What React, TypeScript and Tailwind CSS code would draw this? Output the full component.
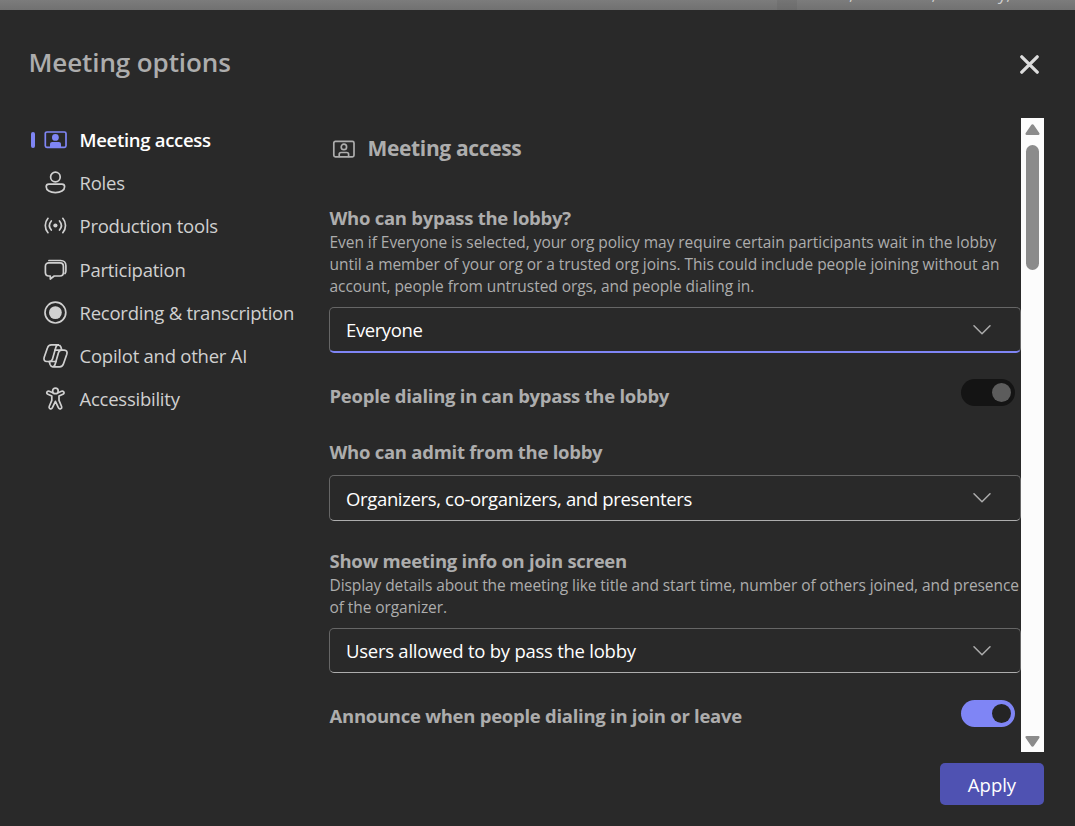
import { ReactNode } from "react";

interface NavItemParameters {
    icon: ReactNode
    label: string
    active?: boolean
}

interface SelectParameters {
    value: string
    focused?: boolean
    className?: string
    textClassName?: string
}

interface IconParameters {
    children: ReactNode
}

const Icon = ({ children }: IconParameters) => (
    <svg
        width="27"
        height="26"
        viewBox="0 0 27 26"
        fill="none"
        stroke="currentColor"
        strokeWidth="1.7"
        strokeLinecap="round"
        strokeLinejoin="round"
        className="shrink-0">
        {children}
    </svg>
);

const AccessFilledIcon = () => (
    <Icon>
        <rect x="3.3" y="5" width="20.7" height="15.4" rx="1.6" />
        <circle cx="13.4" cy="10.4" r="3.4" fill="currentColor" stroke="none" />
        <path d="M8 20.4v-3.2C8 15.9 8.9 15 10.2 15h6.6c1.3 0 2.2.9 2.2 2.2v3.2z" fill="currentColor" stroke="none" />
    </Icon>
);

const AccessIcon = () => (
    <Icon>
        <rect x="3.8" y="5.3" width="20.2" height="15.6" rx="1.6" />
        <circle cx="13.9" cy="10.9" r="2.7" />
        <path d="M9.2 20.5v-2.2c0-1.1.7-1.8 1.8-1.8h5.8c1.1 0 1.8.7 1.8 1.8v2.2" />
    </Icon>
);

const RolesIcon = () => (
    <Icon>
        <circle cx="13.4" cy="7" r="4.8" />
        <path d="M6.9 14.2h13c1.600 0 2.700 1 2.700 2.500 0 3.600-4 5.900-9.200 5.900s-9.200-2.300-9.200-5.900c0-1.500 1.100-2.500 2.700-2.500z" />
    </Icon>
);

const ProductionIcon = () => (
    <Icon>
        <circle cx="13.4" cy="12.5" r="2.1" fill="currentColor" stroke="none" />
        <path d="M6 5.3c-3.600 4.200-3.600 10.200 0 14.400M9.300 8c-2.300 2.700-2.300 6.300 0 9M20.800 5.300c3.600 4.200 3.600 10.200 0 14.400M17.500 8c2.300 2.700 2.300 6.300 0 9" />
    </Icon>
);

const ParticipationIcon = () => (
    <Icon>
        <path d="M6.800 6.800h11.200c2 0 3.400 1.400 3.400 3.400v6.400c0 2-1.400 3.400-3.400 3.400h-5.800L8.300 23v-3H6.800c-2 0-3.400-1.400-3.400-3.400v-6.400c0-2 1.400-3.400 3.400-3.400z" />
        <path d="M6.900 4.500h11.800c3 0 5.200 2.200 5.200 5.200v5c0 1.200-.3 2.100-.9 2.900" />
    </Icon>
);

const RecordingIcon = () => (
    <Icon>
        <circle cx="13.4" cy="12.6" r="10.4" />
        <circle cx="13.4" cy="12.6" r="6.4" fill="currentColor" stroke="none" />
    </Icon>
);

const CopilotIcon = () => (
    <Icon>
        <path d="M19.800 7.200 18.900 4c-.5-1.500-1.300-2.200-2.700-2.200H9.400c-2 0-3.300 1-3.900 3L2.200 14.300c-.8 2.500.3 4.200 2.600 4.200h2.500c1.700 0 2.700-.8 3.200-2.500l3.300-11.500c.5-1.800 1.200-2.700 2.500-2.700" />
        <path d="m7.200 18.500.9 3.100c.5 1.500 1.300 2.200 2.700 2.200h6.800c2 0 3.300-1 3.900-3l3.300-9.500c.8-2.500-.3-4.200-2.600-4.200h-2.500c-1.700 0-2.700.8-3.200 2.500l-3.300 11.500c-.5 1.800-1.200 2.700-2.500 2.700" />
        <path d="M12.900 7.200h6.800M7.300 18.500h6.800" />
    </Icon>
);

const AccessibilityIcon = () => (
    <Icon>
        <circle cx="13.4" cy="4.9" r="2.8" />
        <path d="M10.700 6.700 7.300 5.300c-1-.4-2-.1-2.400.8s0 1.800 1 2.200l3.900 1.700v4.300l-2.600 6.200c-.4 1 0 1.900.8 2.300s1.900 0 2.300-1l3.100-6.500 3.100 6.500c.4 1 1.500 1.400 2.300 1s1.200-1.300.8-2.300L17 14.300V10l3.900-1.700c1-.4 1.400-1.300 1-2.200s-1.400-1.200-2.400-.8l-3.400 1.400" />
    </Icon>
);

const NavItem = ({ icon, label, active }: NavItemParameters) => {
    return (
        <div className={`flex h-[43.17px] items-center pl-[31px] ${active ? "text-[#7f85f5]" : "text-[#d0d0d0]"}`}>
            <div className={`h-4 w-1 rounded-full ${active ? "bg-[#7f85f5]" : ""}`} />
            <div className="ml-[7px]">{icon}</div>
            <span className={`ml-[10.5px] whitespace-nowrap text-[18.5px] ${active ? "font-semibold tracking-[-0.3px] text-white" : "tracking-[-0.24px]"}`}>
                {label}
            </span>
        </div>
    );
}

const Select = ({ value, focused, className = "", textClassName = "" }: SelectParameters) => {
    return (
        <div className={`flex shrink-0 items-center justify-between rounded-[5px] border border-[#666] pl-4 pr-[29px] ${focused ? "border-b-2 border-b-[#7f85f5]" : "border-b-[#adadad]"} ${className}`}>
            <span className={`whitespace-nowrap text-[18.5px] text-white ${textClassName}`}>{value}</span>
            <svg width="18" height="10" viewBox="0 0 18 10" fill="none" stroke="#adadad" strokeWidth="1.5" strokeLinecap="round" strokeLinejoin="round">
                <path d="m1 .8 8 8 8-8" />
            </svg>
        </div>
    );
}

const Toggle = ({ enabled }: { enabled: boolean }) => {
    return (
        <div className={`flex h-[27px] w-[54px] items-center justify-end rounded-full pr-1 ${enabled ? "bg-[#7f85f5]" : "bg-[#141414]"}`}>
            <div className={`size-[19px] rounded-full ${enabled ? "bg-[#242424]" : "bg-[#5c5c5c]"}`} />
        </div>
    );
}

const ScrollBar = () => {
    return (
        <div className="flex w-[23px] shrink-0 flex-col items-center bg-[#fcfcfc]">
            <svg width="15" height="11" viewBox="0 0 15 11" fill="#8b8b8b" className="mt-[6px] shrink-0">
                <path d="M6.200 1.100a1.500 1.500 0 0 1 2.600 0l5.500 8c.6.900.1 1.900-.9 1.900H1.600C.6 11 .1 10 .7 9.100z" />
            </svg>
            <div className="mt-[10px] h-[125px] w-[13px] shrink-0 rounded-full bg-[#8b8b8b]" />
            <svg width="15" height="11" viewBox="0 0 15 11" fill="#8b8b8b" className="mb-[5px] mt-auto shrink-0">
                <path d="M6.200 9.900a1.500 1.500 0 0 0 2.600 0l5.500-8C14.900 1 14.400 0 13.400 0H1.600C.6 0 .1 1 .7 1.900z" />
            </svg>
        </div>
    );
}

const App = () => {
    return (
        <div className="flex h-[826px] w-[1075px] flex-col overflow-hidden bg-[#292929] font-['Open_Sans','Liberation_Sans',sans-serif] text-[#adadad]">
            <div className="flex h-[10px] shrink-0 overflow-hidden bg-linear-to-b from-[#7c7c7c] to-[#717171]">
                <div className="ml-[777px] w-5 bg-black/5" />
                <div className="-mt-[18.5px] flex text-[17px] leading-6 text-[#d0d0d0]">
                    <span className="ml-[52px]">,</span>
                    <span className="ml-[78px]">,</span>
                    <span className="ml-[62px]">y,</span>
                </div>
            </div>

            <header className="flex h-[108px] shrink-0 items-start justify-between pl-[28.5px] pr-[36px]">
                <h1 className="mt-[35px] whitespace-nowrap text-[26px] font-semibold leading-[34px] tracking-[-0.1px]">
                    Meeting options
                </h1>
                <svg width="19" height="19" viewBox="0 0 19 19" stroke="#dcdcdc" strokeWidth="3.3" strokeLinecap="round" className="mt-[45px]">
                    <path d="m1.800 1.800 15.400 15.400M17.200 1.800 1.800 17.200" />
                </svg>
            </header>

            <div className="flex h-[634px] shrink-0">
                <nav className="w-[329px] shrink-0 pt-[0.4px]">
                    <NavItem icon={<AccessFilledIcon />} label="Meeting access" active />
                    <NavItem icon={<RolesIcon />} label="Roles" />
                    <NavItem icon={<ProductionIcon />} label="Production tools" />
                    <NavItem icon={<ParticipationIcon />} label="Participation" />
                    <NavItem icon={<RecordingIcon />} label="Recording & transcription" />
                    <NavItem icon={<CopilotIcon />} label="Copilot and other AI" />
                    <NavItem icon={<AccessibilityIcon />} label="Accessibility" />
                </nav>

                <main className="flex w-[692px] shrink-0 flex-col pl-[0.5px] text-[18.5px] leading-6">
                    <div className="flex h-[62px] shrink-0 items-center gap-[11px]">
                        <AccessIcon />
                        <h2 className="-mt-0.5 whitespace-nowrap text-[21px] font-bold tracking-[-0.35px]">Meeting access</h2>
                    </div>

                    <h3 className="mt-[26px] whitespace-nowrap font-bold tracking-[-0.27px]">Who can bypass the lobby?</h3>
                    <p className="mt-px whitespace-nowrap text-[15.5px] leading-[22px] tracking-[-0.05px]">
                        Even if Everyone is selected, your org policy may require certain participants wait in the lobby<br />
                        until a member of your org or a trusted org joins. This could include people joining without an<br />
                        account, people from untrusted orgs, and people dialing in.
                    </p>
                    <Select value="Everyone" focused className="-ml-[0.5px] mt-[10px] h-[46px]" textClassName="tracking-[-0.4px]" />

                    <div className="mt-[26px] flex h-[61px] shrink-0 items-start justify-between pr-[6px]">
                        <h3 className="mt-[5px] whitespace-nowrap font-bold tracking-[-0.27px]">People dialing in can bypass the lobby</h3>
                        <Toggle enabled={false} />
                    </div>

                    <h3 className="whitespace-nowrap font-bold tracking-[-0.27px]">Who can admit from the lobby</h3>
                    <Select value="Organizers, co-organizers, and presenters" className="-ml-[0.5px] mt-[11px] h-[46px]" textClassName="pt-0.5 tracking-[-0.35px]" />

                    <h3 className="mt-[28px] whitespace-nowrap font-bold tracking-[-0.27px]">Show meeting info on join screen</h3>
                    <p className="mt-[2px] whitespace-nowrap text-[15.5px] leading-[21.5px] tracking-[-0.08px]">
                        Display details about the meeting like title and start time, number of others joined, and presence<br />
                        of the organizer.
                    </p>
                    <Select value="Users allowed to by pass the lobby" className="-ml-[0.5px] mt-[10px] h-[45px]" textClassName="tracking-[-0.25px]" />

                    <div className="mt-[27px] flex shrink-0 items-start justify-between pr-[6px]">
                        <h3 className="mt-1 whitespace-nowrap font-bold tracking-[-0.27px]">Announce when people dialing in join or leave</h3>
                        <Toggle enabled />
                    </div>
                </main>

                <ScrollBar />
            </div>

            <footer className="mt-[11px] flex shrink-0 justify-end pr-[31px]">
                <button className="h-[42px] w-[104px] rounded-[5px] bg-[#4f52b2] pt-0.5 text-[18.5px] text-white">
                    Apply
                </button>
            </footer>
        </div>
    );
}

export default App;
